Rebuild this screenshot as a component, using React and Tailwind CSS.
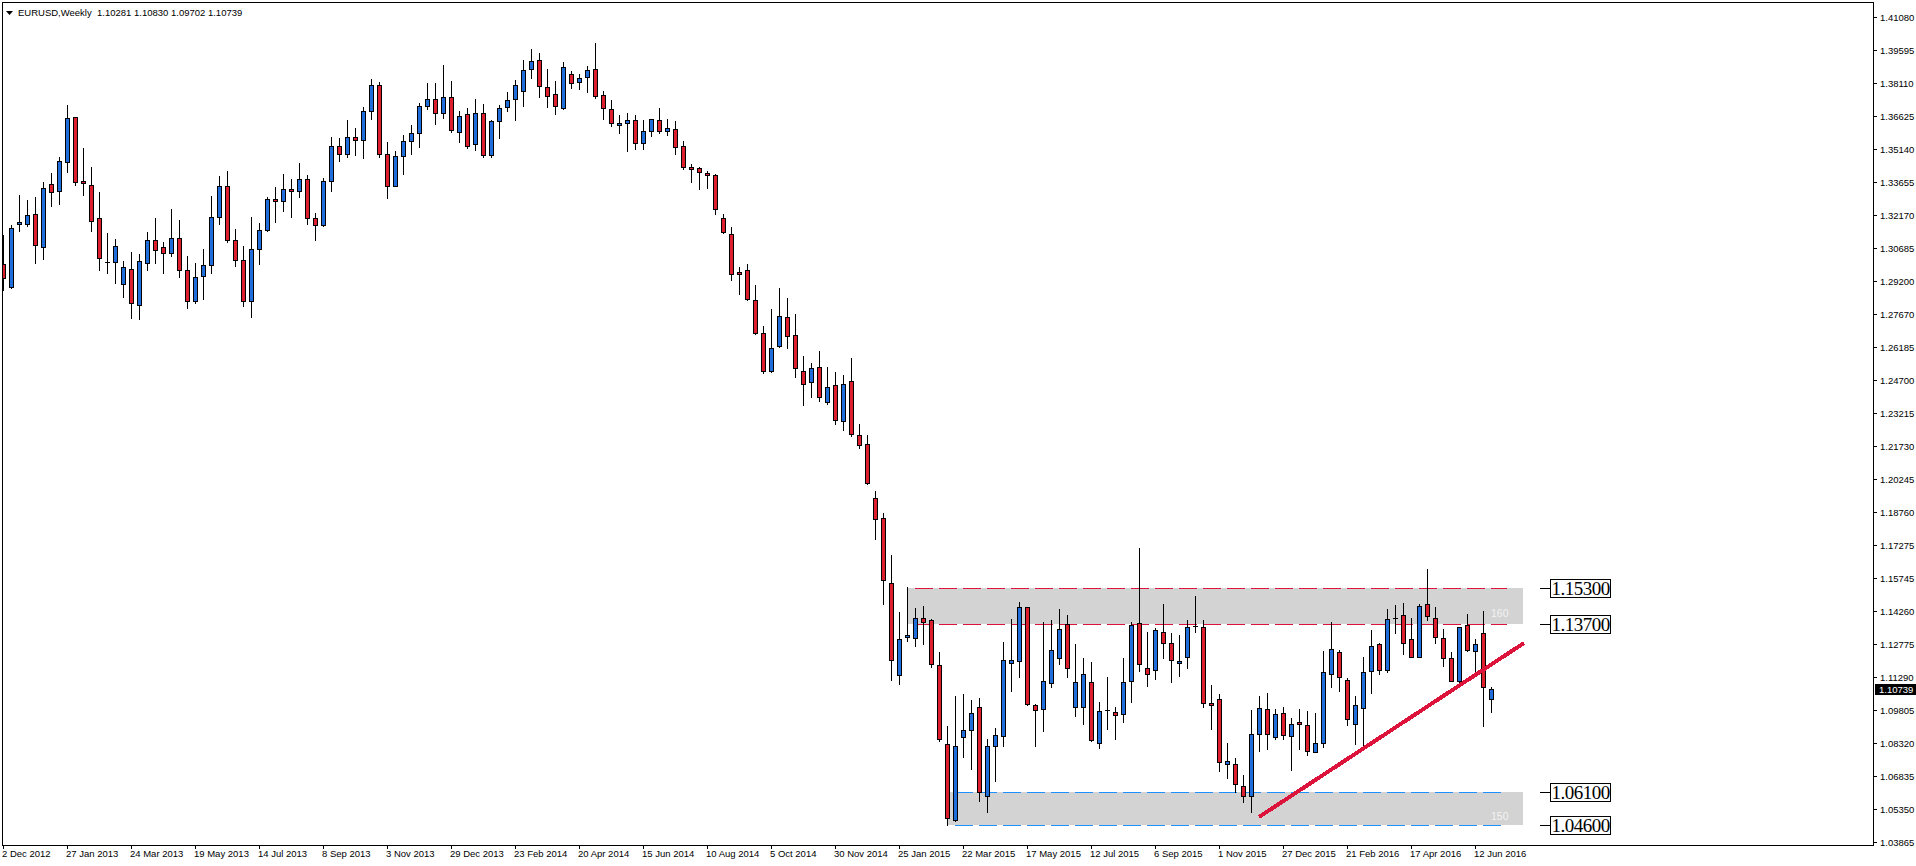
import React from "react";

const BLUE = "#1e6fdc";
const RED = "#dc1e2d";

// high, top, bottom, low, kind - read off the chart, 3 units = 1px
const early = [
  [705,793,835,872,"r"],[675,685,863,866,"b"],[585,667,674,695,"b"],[600,646,674,680,"b"],[591,643,736,791,"r"],
  [546,565,742,779,"b"],[519,553,577,620,"r"],[472,484,574,614,"b"],[315,355,487,516,"b"],[351,352,547,557,"r"],
  [444,544,551,587,"r"],[501,556,664,695,"r"],[576,655,775,812,"r"],[699,788,788,821,"d"],[717,739,787,851,"b"],
  [783,802,853,893,"b"],[756,808,910,956,"r"],[762,784,916,959,"b"],[697,721,790,812,"b"],[654,721,751,791,"r"],
  [727,742,761,821,"r"],[627,715,760,770,"b"],[660,715,811,833,"r"],[768,811,904,926,"r"],[789,832,904,911,"b"],
  [747,796,829,899,"b"],[588,652,796,821,"b"],[528,559,652,674,"b"],[513,559,721,728,"r"],[687,721,781,800,"r"],
  [738,781,904,920,"r"],[651,748,904,953,"b"],[669,691,748,794,"b"],[591,598,691,694,"b"],[561,598,604,668,"r"],
  [522,568,604,635,"b"],[537,568,574,653,"r"],[489,538,574,593,"b"],[525,538,655,674,"r"],[639,655,676,722,"r"],
  [535,544,677,679,"b"],[411,439,544,575,"b"],[414,439,463,485,"r"],[360,412,463,473,"b"],[384,412,421,467,"r"],
  [321,334,421,476,"b"],[237,256,334,359,"b"],[246,256,463,473,"r"],[426,463,559,596,"r"],[453,469,559,559,"b"],
  [405,424,469,524,"b"],[375,400,424,464,"b"],[309,319,400,443,"b"],[249,298,319,329,"b"],[249,298,340,374,"r"],
  [195,292,340,356,"b"],[243,292,391,398,"r"],[333,349,397,426,"b"],[324,343,439,446,"r"],[297,340,433,452,"b"],
  [312,340,466,473,"r"],[360,364,466,473,"b"],[315,325,364,416,"b"],[276,301,322,335,"b"],[240,256,298,362,"b"],
  [180,211,274,320,"b"],[147,184,208,236,"b"],[159,181,259,293,"r"],[207,262,289,323,"r"],[243,283,319,344,"r"],
  [186,202,325,329,"b"],[213,223,250,266,"r"],[222,235,247,269,"b"],[198,211,232,278,"b"],[129,208,289,296,"r"],
  [273,286,325,359,"r"],[300,328,370,380,"r"],[345,370,376,401,"b"],[339,361,370,455,"b"],[345,361,430,449,"r"],
  [360,394,430,449,"b"],[358,358,394,410,"b"],[324,361,394,401,"r"],[357,385,394,407,"b"],[363,388,442,464,"r"],
  [423,439,502,509,"r"],[492,502,508,548,"r"],[502,505,517,569,"r"],[514,520,526,566,"r"],[522,526,628,644,"r"],
  [642,655,697,701,"r"],[681,703,823,842,"r"],[801,817,823,884,"r"],[792,811,898,901,"r"],[855,901,1000,1004,"r"],
  [978,1000,1114,1121,"r"],[927,1045,1114,1117,"b"],[864,949,1039,1043,"b"],[894,952,1009,1046,"r"],[942,1006,1105,1133,"r"],
  [1068,1114,1153,1217,"r"],[1089,1105,1147,1193,"b"],[1053,1102,1192,1205,"r"],[1101,1162,1207,1214,"b"],[1116,1156,1261,1274,"r"],
  [1125,1153,1264,1292,"b"],[1074,1144,1303,1310,"r"],[1272,1306,1336,1346,"r"],[1305,1333,1450,1454,"r"],[1473,1495,1558,1619,"r"],
];

// same units, measured from y=520
const late = [
  [-21,-5,181,254,"r"],[105,190,421,482,"r"],[276,358,466,494,"b"],[201,346,352,365,"b"],[264,295,355,380,"b"],
  [258,295,307,374,"r"],[297,301,433,443,"r"],[396,436,658,665,"r"],[618,673,895,917,"r"],[528,679,901,905,"b"],
  [522,631,652,713,"b"],[540,580,631,749,"b"],[534,562,817,845,"r"],[657,679,829,878,"b"],[624,646,679,785,"b"],
  [366,421,649,680,"b"],[297,421,430,515,"b"],[246,262,424,473,"b"],[262,262,553,557,"r"],[553,556,571,680,"r"],
  [306,484,568,635,"b"],[300,391,490,503,"b"],[267,328,415,434,"b"],[285,313,445,473,"r"],[372,487,562,590,"b"],
  [414,463,562,614,"b"],[426,487,661,665,"r"],[546,574,670,686,"b"],[471,572,572,629,"d"],[561,577,586,659,"r"],
  [414,487,583,608,"b"],[306,316,484,548,"b"],[84,310,433,455,"r"],[336,445,463,500,"r"],[325,331,451,479,"b"],
  [252,337,370,416,"r"],[339,370,421,488,"r"],[345,424,430,470,"b"],[300,322,412,446,"b"],[228,320,320,338,"d"],
  [300,322,550,563,"r"],[495,550,556,629,"r"],[522,538,727,755,"r"],[669,724,733,776,"b"],[714,733,793,817,"r"],
  [765,799,829,848,"r"],[570,643,829,878,"b"],[528,565,643,695,"b"],[519,568,643,689,"r"],[567,583,652,659,"b"],
  [561,580,646,659,"r"],[594,613,649,752,"b"],[567,607,613,689,"r"],[573,616,694,707,"r"],[579,670,697,697,"b"],
  [393,457,670,683,"b"],[306,388,463,503,"b"],[391,397,472,515,"r"],[475,481,598,617,"r"],[528,556,613,674,"b"],
  [411,457,565,677,"b"],[330,379,454,521,"b"],[370,373,451,464,"r"],[267,298,451,458,"b"],[255,294,294,341,"d"],
  [249,286,370,404,"r"],[294,358,412,412,"r"],[252,259,412,412,"b"],[147,253,289,302,"r"],[261,295,352,371,"r"],
  [327,355,415,440,"r"],[396,415,484,484,"r"],[322,322,484,490,"b"],[282,316,391,395,"r"],[357,373,394,460,"b"],
  [273,340,502,620,"r"],[502,508,538,578,"b"],
];

const candles = [...early, ...late.map(([h, t, b, l, k]) => [h + 1560, t + 1560, b + 1560, l + 1560, k])];

const prices = [
  "1.41080","1.39595","1.38110","1.36625","1.35140","1.33655","1.32170","1.30685","1.29200",
  "1.27670","1.26185","1.24700","1.23215","1.21730","1.20245","1.18760","1.17275",
  "1.15745","1.14260","1.12775","1.11290","1.09805","1.08320","1.06835","1.05350","1.03865",
];

const dates = [
  "2 Dec 2012","27 Jan 2013","24 Mar 2013","19 May 2013","14 Jul 2013","8 Sep 2013","3 Nov 2013","29 Dec 2013",
  "23 Feb 2014","20 Apr 2014","15 Jun 2014","10 Aug 2014","5 Oct 2014","30 Nov 2014","25 Jan 2015","22 Mar 2015",
  "17 May 2015","12 Jul 2015","6 Sep 2015","1 Nov 2015","27 Dec 2015","21 Feb 2016","17 Apr 2016","12 Jun 2016",
];

const levels = [
  { text: "1.15300", y: 579, line: 588 },
  { text: "1.13700", y: 615, line: 624 },
  { text: "1.06100", y: 783, line: 792 },
  { text: "1.04600", y: 816, line: 825 },
];

// page px to svg px: the plot starts at 3,3
const py = (v) => Math.floor(v / 3) - 3;

const Candle = ({ data, i }) => {
  const [high, top, bottom, low, kind] = data;
  const x = 8 * i;
  return (
    <g>
      <rect x={x} y={py(high)} width="1" height={py(low) - py(high) + 1} fill="#000" />
      {kind === "d" ? (
        <rect x={x - 2} y={py(top)} width="5" height="1" fill="#000" />
      ) : (
        <rect
          x={x - 1.5}
          y={py(top) + 0.5}
          width="4"
          height={py(bottom) - py(top)}
          fill={kind === "b" ? BLUE : RED}
          stroke="#000"
        />
      )}
    </g>
  );
};

const Chart = () => (
  <svg width="1870" height="842" className="block" shapeRendering="crispEdges">
    <rect x="905" y="585" width="615" height="36" fill="#d3d3d3" />
    <rect x="945" y="789" width="575" height="33" fill="#d3d3d3" />
    <line x1="912" x2="1504" y1="585.5" y2="585.5" stroke="#dc143c" strokeDasharray="18 6" />
    <line x1="912" x2="1504" y1="621.5" y2="621.5" stroke="#dc143c" strokeDasharray="18 6" />
    <line x1="952" x2="1498" y1="789.5" y2="789.5" stroke="#1e90ff" strokeDasharray="18 6" />
    <line x1="952" x2="1498" y1="822.5" y2="822.5" stroke="#1e90ff" strokeDasharray="18 6" />
    {candles.map((c, i) => (
      <Candle key={i} data={c} i={i} />
    ))}
    <line x1="1256" y1="814" x2="1521" y2="640" stroke="#dc143c" strokeWidth="4" />
    {levels.map((l) => (
      <rect key={l.text} x="1537" y={l.line - 3} width="10" height="1" fill="#000" />
    ))}
  </svg>
);

export default function App() {
  return (
    <div className="w-[1916px] h-[866px] bg-white overflow-hidden pt-[2px] font-['Liberation_Sans',sans-serif] text-[9.5px] leading-[10px] text-black">
      <div className="flex h-[844px]">
        <div className="relative ml-[2px] w-[1872px] h-[844px] box-border border border-black overflow-hidden">
          <Chart />

          <div className="absolute left-[3px] top-[5px] flex items-center">
            <svg width="7" height="4" viewBox="0 0 7 4" className="block">
              <path d="M0 0h7L3.5 4z" fill="#000" />
            </svg>
            <span className="ml-[5px] whitespace-pre">EURUSD,Weekly  1.10281 1.10830 1.09702 1.10739</span>
          </div>

          <span className="absolute left-[1488px] top-[605px] text-[10.5px] text-[#f2f2f2]">160</span>
          <span className="absolute left-[1488px] top-[808px] text-[10.5px] text-[#f2f2f2]">150</span>

          {levels.map((l) => (
            <div
              key={l.text}
              style={{ top: l.y - 3 }}
              className="absolute left-[1547px] w-[61px] h-[19px] box-border border border-black bg-white flex items-center justify-center font-['Liberation_Serif',serif] text-[19px] tracking-[-0.5px]"
            >
              {l.text}
            </div>
          ))}
        </div>

        <div className="relative w-[42px] -mt-px">
          {prices.map((p) => (
            <div key={p} className="h-[33px] flex items-center">
              <div className="w-[3px] h-px bg-black" />
              <span className="ml-[3px]">{p}</span>
            </div>
          ))}
          <div className="absolute left-px top-[683px] w-[41px] h-[11px] bg-black text-white pl-[4px] flex items-center">
            1.10739
          </div>
        </div>
      </div>

      <div className="flex ml-[3px]">
        {dates.map((d) => (
          <div key={d} className="w-[64px]">
            <div className="w-px h-[3px] bg-black" />
            <div className="-ml-px whitespace-nowrap">{d}</div>
          </div>
        ))}
      </div>
    </div>
  );
}
